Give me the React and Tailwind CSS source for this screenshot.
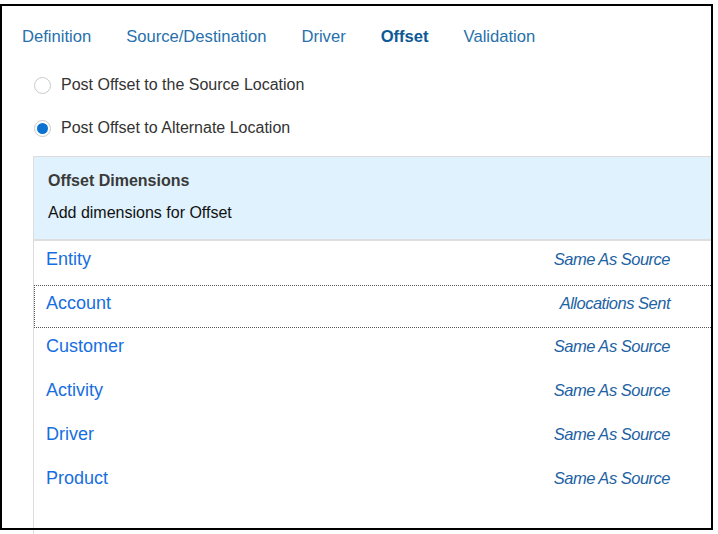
import React, { useState } from "react";

const TABS = ["Definition", "Source/Destination", "Driver", "Offset", "Validation"];

const DIMENSIONS = [
  { name: "Entity", value: "Same As Source" },
  { name: "Account", value: "Allocations Sent", focused: true },
  { name: "Customer", value: "Same As Source" },
  { name: "Activity", value: "Same As Source" },
  { name: "Driver", value: "Same As Source" },
  { name: "Product", value: "Same As Source" }
];

function Radio({ checked, label, onClick }) {
  return (
    <button
      type="button"
      onClick={onClick}
      className="flex items-center gap-[10px] h-[24px] text-left"
    >
      <span className="w-[17px] h-[17px] rounded-full border border-[#c9c9c9] bg-white flex items-center justify-center">
        {checked && <span className="w-[11px] h-[11px] rounded-full bg-[#0b72d1]" />}
      </span>
      <span className="text-[16px] text-[#333333]">{label}</span>
    </button>
  );
}

export default function App() {
  const [tab, setTab] = useState("Offset");
  const [target, setTarget] = useState("alternate");

  return (
    <div className="relative w-[718px] h-[534px] bg-white overflow-hidden font-['Liberation_Sans','Noto_Sans',sans-serif]">
      {/* screenshot frame */}
      <div className="absolute left-[0px] top-[4px] w-[713px] h-[526px] border-2 border-black pointer-events-none z-10" />

      <div className="flex gap-[35px] pl-[22px] pt-[25px] h-[49px]">
        {TABS.map((t) => (
          <button
            key={t}
            type="button"
            onClick={() => setTab(t)}
            className={
              t === tab
                ? "text-[16.6px] leading-[24px] font-bold text-[#0d5896]"
                : "text-[16.6px] leading-[24px] text-[#2670ad]"
            }
          >
            {t}
          </button>
        ))}
      </div>

      <div className="flex flex-col gap-[19px] pl-[34px] pt-[24px]">
        <Radio
          checked={target === "source"}
          label="Post Offset to the Source Location"
          onClick={() => setTarget("source")}
        />
        <Radio
          checked={target === "alternate"}
          label="Post Offset to Alternate Location"
          onClick={() => setTarget("alternate")}
        />
      </div>

      <div className="ml-[33px] mt-[16px] w-[680px] h-[400px] border-l border-t border-[#dcdcdc]">
        <div className="bg-[#e0f2fd] border-b-2 border-[#dedede] pl-[14px] pt-[13px] pb-[15px] flex flex-col gap-[10px]">
          <div className="text-[16px] leading-[22px] font-bold text-[#3a3a3a]">Offset Dimensions</div>
          <div className="text-[16px] leading-[22px] text-[#111111]">Add dimensions for Offset</div>
        </div>
        <div className="flex flex-col">
          {DIMENSIONS.map((d) => (
            <div
              key={d.name}
              className={
                d.focused
                  ? "h-[43px] flex items-baseline justify-between pl-[12px] pr-[43px] pt-[6px] outline-1 outline-dotted outline-[#555555] -outline-offset-1"
                  : "h-[44px] flex items-baseline justify-between pl-[12px] pr-[43px] pt-[6px]"
              }
            >
              <span className="text-[18px] leading-[24px] text-[#176ee0]">{d.name}</span>
              <span className="text-[16.5px] leading-[24px] italic tracking-[-0.5px] text-[#1d62a3]">{d.value}</span>
            </div>
          ))}
        </div>
      </div>
    </div>
  );
}
